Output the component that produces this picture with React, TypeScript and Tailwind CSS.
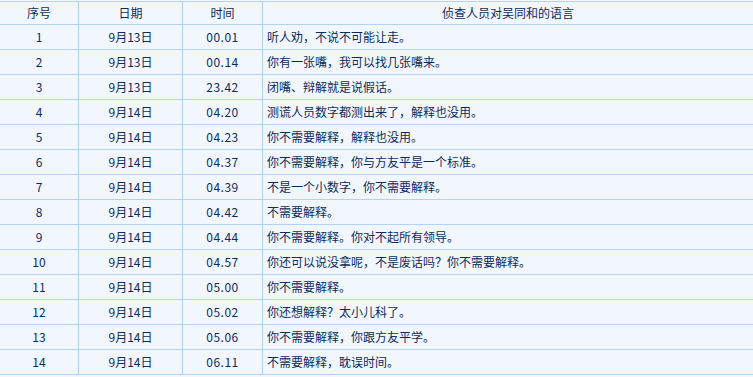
const rows: [string, string, string, string][] = [
  ['1', '9月13日', '00.01', '听人劝，不说不可能让走。'],
  ['2', '9月13日', '00.14', '你有一张嘴，我可以找几张嘴来。'],
  ['3', '9月13日', '23.42', '闭嘴、辩解就是说假话。'],
  ['4', '9月14日', '04.20', '测谎人员数字都测出来了，解释也没用。'],
  ['5', '9月14日', '04.23', '你不需要解释，解释也没用。'],
  ['6', '9月14日', '04.37', '你不需要解释，你与方友平是一个标准。'],
  ['7', '9月14日', '04.39', '不是一个小数字，你不需要解释。'],
  ['8', '9月14日', '04.42', '不需要解释。'],
  ['9', '9月14日', '04.44', '你不需要解释。你对不起所有领导。'],
  ['10', '9月14日', '04.57', '你还可以说没拿呢，不是废话吗？你不需要解释。'],
  ['11', '9月14日', '05.00', '你不需要解释。'],
  ['12', '9月14日', '05.02', '你还想解释？太小儿科了。'],
  ['13', '9月14日', '05.06', '你不需要解释，你跟方友平学。'],
  ['14', '9月14日', '06.11', '不需要解释，耽误时间。'],
];

export default function App() {
  return (
    <div
      className="w-[753px] h-[377px] bg-[#f4f8fd] pt-px text-[12px] text-[#0c2c5c] overflow-hidden"
      style={{ fontFamily: '"Noto Sans CJK SC", "Noto Sans", sans-serif' }}
    >
      <div className="flex h-[24px] border-t border-b border-[#b2d2f1] bg-[#f2f7fe] leading-[22px]">
        <div className="w-[79px] border-r border-[#b2d2f1] text-center">序号</div>
        <div className="w-[104px] border-r border-[#b2d2f1] text-center">日期</div>
        <div className="w-[80px] border-r border-[#b2d2f1] text-center">时间</div>
        <div className="flex-1 text-center">侦查人员对吴同和的语言</div>
      </div>
      {rows.map((r) => (
        <div key={r[0]} className="flex h-[25px] border-b border-[#b2d2f1] bg-[#f2f7fe] leading-[24px]">
          <div className="w-[79px] border-r border-[#b2d2f1] text-center">{r[0]}</div>
          <div className="w-[104px] border-r border-[#b2d2f1] text-center">{r[1]}</div>
          <div className="w-[80px] border-r border-[#b2d2f1] text-center tracking-[0.5px]">{r[2]}</div>
          <div className="flex-1 pl-[4px]">{r[3]}</div>
        </div>
      ))}
    </div>
  );
}
